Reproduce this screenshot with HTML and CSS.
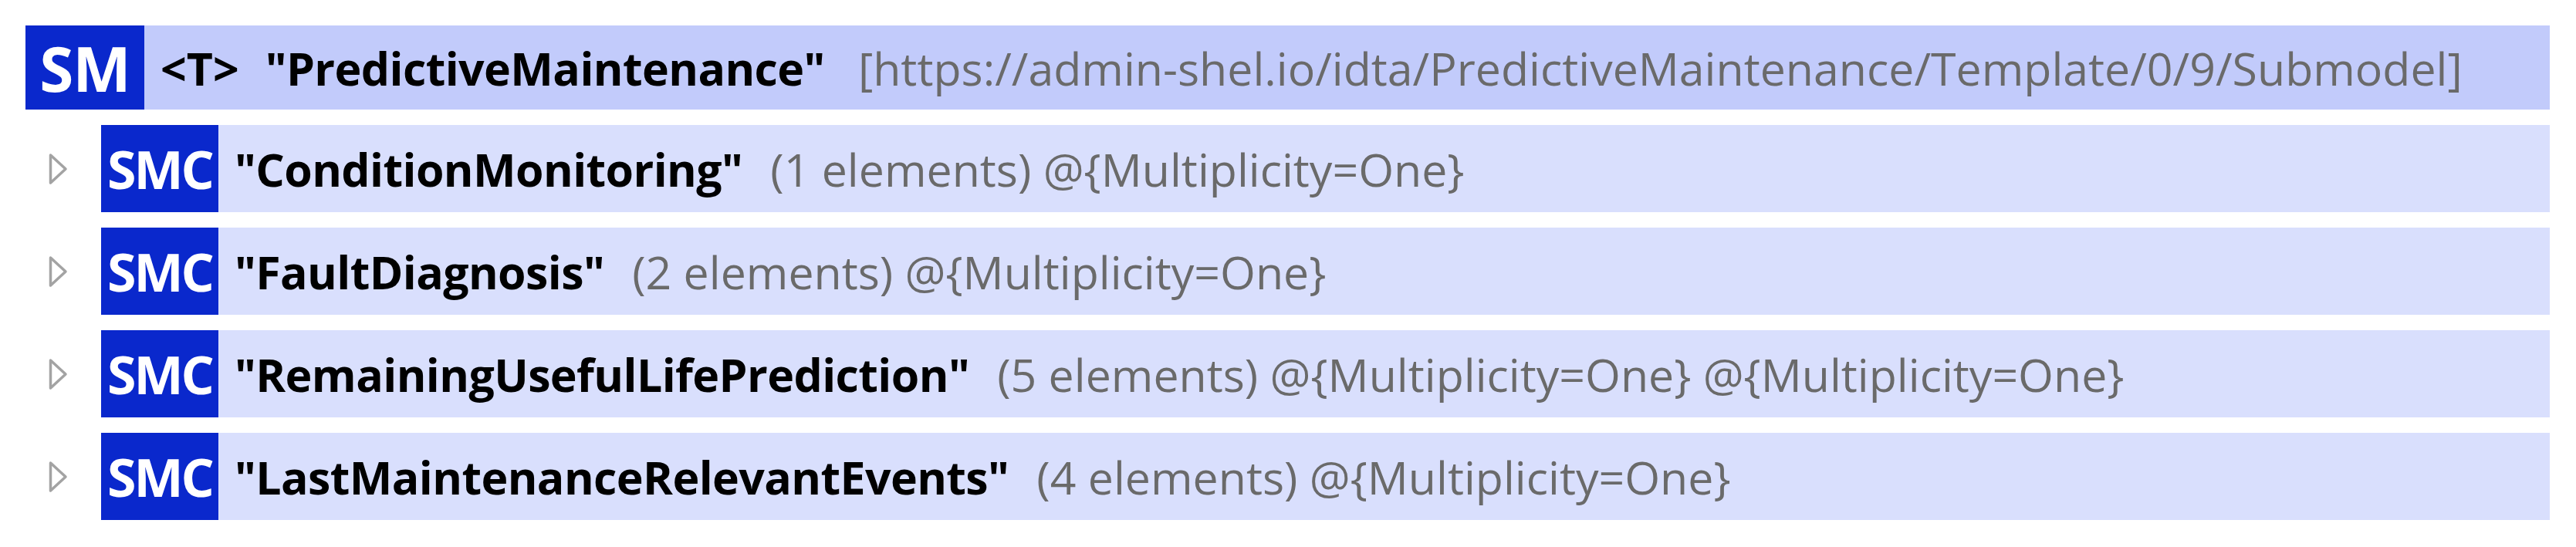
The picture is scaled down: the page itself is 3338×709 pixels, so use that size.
FILE: index.html
```html
<!DOCTYPE html>
<html>
<head>
<meta charset="utf-8">
<link rel="stylesheet" href="styles.css">
</head>
<body>
<div class="tree">
  <div class="node node-sm">
    <div class="badge badge-sm">SM</div>
    <div class="label">
      <span class="tag">&lt;T&gt;</span>
      <span class="name">"PredictiveMaintenance"</span>
      <span class="info info-wide">[https://admin-shel.io/idta/PredictiveMaintenance/Template/0/9/Submodel]</span>
    </div>
  </div>

  <div class="row">
    <div class="expander"><svg width="25" height="42" viewBox="0 0 25 42"><polygon points="2.5,3 22,21 2.5,39" fill="none" stroke="#a3a3a3" stroke-width="3.5" stroke-linejoin="round"/></svg></div>
    <div class="node node-smc">
      <div class="badge badge-smc">SMC</div>
      <div class="label">
        <span class="name">"ConditionMonitoring"</span>
        <span class="info">(1 elements) @{Multiplicity=One}</span>
      </div>
    </div>
  </div>

  <div class="row">
    <div class="expander"><svg width="25" height="42" viewBox="0 0 25 42"><polygon points="2.5,3 22,21 2.5,39" fill="none" stroke="#a3a3a3" stroke-width="3.5" stroke-linejoin="round"/></svg></div>
    <div class="node node-smc">
      <div class="badge badge-smc">SMC</div>
      <div class="label">
        <span class="name">"FaultDiagnosis"</span>
        <span class="info">(2 elements) @{Multiplicity=One}</span>
      </div>
    </div>
  </div>

  <div class="row">
    <div class="expander"><svg width="25" height="42" viewBox="0 0 25 42"><polygon points="2.5,3 22,21 2.5,39" fill="none" stroke="#a3a3a3" stroke-width="3.5" stroke-linejoin="round"/></svg></div>
    <div class="node node-smc">
      <div class="badge badge-smc">SMC</div>
      <div class="label">
        <span class="name">"RemainingUsefulLifePrediction"</span>
        <span class="info">(5 elements) @{Multiplicity=One} @{Multiplicity=One}</span>
      </div>
    </div>
  </div>

  <div class="row">
    <div class="expander"><svg width="25" height="42" viewBox="0 0 25 42"><polygon points="2.5,3 22,21 2.5,39" fill="none" stroke="#a3a3a3" stroke-width="3.5" stroke-linejoin="round"/></svg></div>
    <div class="node node-smc">
      <div class="badge badge-smc">SMC</div>
      <div class="label">
        <span class="name">"LastMaintenanceRelevantEvents"</span>
        <span class="info">(4 elements) @{Multiplicity=One}</span>
      </div>
    </div>
  </div>
</div>
</body>
</html>
```

FILE: styles.css
```css
html, body {
  margin: 0;
  padding: 0;
  background: #ffffff;
}

.tree {
  display: flex;
  flex-direction: column;
  gap: 20px;
  padding: 33px 34px 0 33px;
  font-family: "Open Sans", "Noto Sans", sans-serif;
}

.node {
  display: flex;
  align-items: stretch;
  flex: 1;
}

.node-sm {
  height: 114px;
  background: #c2cbfb;
}

.node-smc {
  height: 113px;
  background: #d9dffd;
}

.row {
  display: flex;
  align-items: stretch;
}

.expander {
  width: 98px;
  flex: none;
  display: flex;
  align-items: center;
  padding-left: 30px;
  box-sizing: border-box;
}

.expander svg {
  display: block;
}

.badge {
  flex: none;
  width: 154px;
  background: #0a28cc;
  color: #ffffff;
  font-weight: 700;
  display: flex;
  align-items: center;
  justify-content: center;
}

.badge-sm {
  font-size: 80px;
  letter-spacing: -1px;
}

.badge-smc {
  width: 152px;
  font-size: 68px;
  letter-spacing: -3px;
}

.label {
  display: flex;
  align-items: center;
  padding-left: 21px;
  font-size: 59px;
  white-space: nowrap;
}

.tag {
  font-weight: 700;
  color: #000000;
  margin-right: 34px;
}

.name {
  font-weight: 700;
  color: #000000;
  letter-spacing: -0.6px;
}

.info {
  color: #6a6a6a;
  margin-left: 36px;
}

.info-wide {
  margin-left: 43px;
}
```
